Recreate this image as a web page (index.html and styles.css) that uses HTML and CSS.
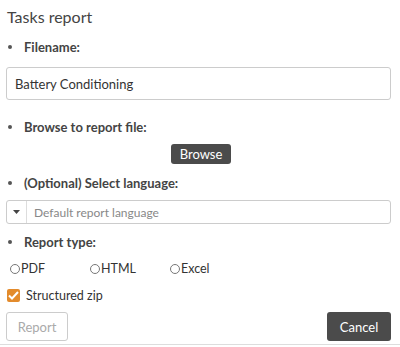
FILE: index.html
```html
<!DOCTYPE html>
<html lang="en">
<head>
  <meta charset="UTF-8" />
  <meta name="viewport" content="width=device-width, initial-scale=1.0" />
  <title>Tasks report</title>
  <link rel="stylesheet" href="styles.css">
</head>
<body>

  <div class="dialog">
    <h2 class="dialog-title">Tasks report</h2>

    <ul class="fields">
      <li class="field-label">Filename:</li>
    </ul>
    <input type="text" class="input-field" value="Battery Conditioning">

    <ul class="fields">
      <li class="field-label">Browse to report file:</li>
    </ul>
    <div class="browse-row">
      <button class="dark-btn browse-btn">Browse</button>
    </div>

    <ul class="fields">
      <li class="field-label">(Optional) Select language:</li>
    </ul>
    <div class="select-box">
      <span class="select-arrow">
        <svg width="7" height="4" viewBox="0 0 7 4"><path d="M0 0 L7 0 L3.5 4 Z" fill="#444"/></svg>
      </span>
      <span class="select-placeholder">Default report language</span>
    </div>

    <ul class="fields">
      <li class="field-label">Report type:</li>
    </ul>
    <div class="radio-row">
      <label class="radio-item"><span class="radio"></span>PDF</label>
      <label class="radio-item"><span class="radio"></span>HTML</label>
      <label class="radio-item"><span class="radio"></span>Excel</label>
    </div>

    <label class="check-row">
      <span class="checkbox">
        <svg width="11" height="9" viewBox="0 0 11 9"><path d="M1 4.5 L4 7.5 L10 1" fill="none" stroke="#fff" stroke-width="2"/></svg>
      </span>
      Structured zip
    </label>

    <div class="actions">
      <button class="light-btn">Report</button>
      <button class="dark-btn cancel-btn">Cancel</button>
    </div>
  </div>

</body>
</html>
```

FILE: styles.css
```css
* {
  margin: 0;
  padding: 0;
  box-sizing: border-box;
  font-family: 'Lato', sans-serif;
}
body {
  background: #fff;
  color: #333;
}
.dialog {
  width: 400px;
  height: 345px;
  padding: 7px 9px 0 6px;
  border-bottom: 1px solid #ddd;
  display: flex;
  flex-direction: column;
}
.dialog-title {
  font-size: 16px;
  font-weight: normal;
  color: #444;
  line-height: 20px;
  margin-left: 1px;
  margin-bottom: 12px;
}
.fields {
  list-style: none;
}
.field-label {
  font-size: 13px;
  font-weight: bold;
  color: #444;
  line-height: 16px;
  padding-left: 18px;
  position: relative;
}
.field-label::before {
  content: '';
  position: absolute;
  left: 2px;
  top: 6px;
  width: 4px;
  height: 4px;
  border-radius: 50%;
  background: #555;
}
.input-field {
  width: 100%;
  height: 33px;
  margin: 12px 0 19px;
  padding: 0 8px;
  font-size: 13px;
  color: #333;
  border: 1px solid #ccc;
  border-radius: 3px;
  outline: none;
}
.browse-row {
  display: flex;
  justify-content: center;
  margin: 9px 0 11px;
  padding-left: 5px;
}
.dark-btn {
  background: #4b4b4b;
  color: #fff;
  border: none;
  border-radius: 3px;
  font-size: 13px;
  cursor: pointer;
}
.browse-btn {
  width: 60px;
  height: 20px;
}
.select-box {
  display: flex;
  align-items: center;
  height: 24px;
  margin: 9px 0 10px;
  border: 1px solid #ccc;
  border-radius: 3px;
}
.select-arrow {
  width: 20px;
  height: 100%;
  border-right: 1px solid #ddd;
  display: flex;
  align-items: center;
  justify-content: center;
}
.select-placeholder {
  font-size: 12px;
  color: #888;
  padding-left: 7px;
}
.radio-row {
  display: flex;
  margin: 11px 0 0 4px;
}
.radio-item {
  display: flex;
  align-items: center;
  width: 80px;
  font-size: 12.5px;
  color: #333;
}
.radio {
  width: 10px;
  height: 10px;
  border: 1px solid #777;
  border-radius: 50%;
  margin-right: 1px;
}
.check-row {
  display: flex;
  align-items: center;
  margin: 12px 0 0 1px;
  font-size: 12.5px;
  color: #333;
}
.checkbox {
  width: 13px;
  height: 13px;
  background: #e38b2c;
  border-radius: 2px;
  margin-right: 6px;
  display: flex;
  align-items: center;
  justify-content: center;
}
.actions {
  display: flex;
  justify-content: space-between;
  margin-top: 9px;
}
.light-btn {
  width: 62px;
  height: 29px;
  background: #fff;
  border: 1px solid #ccc;
  border-radius: 3px;
  color: #aaa;
  font-size: 13px;
}
.cancel-btn {
  width: 64px;
  height: 29px;
}
```
